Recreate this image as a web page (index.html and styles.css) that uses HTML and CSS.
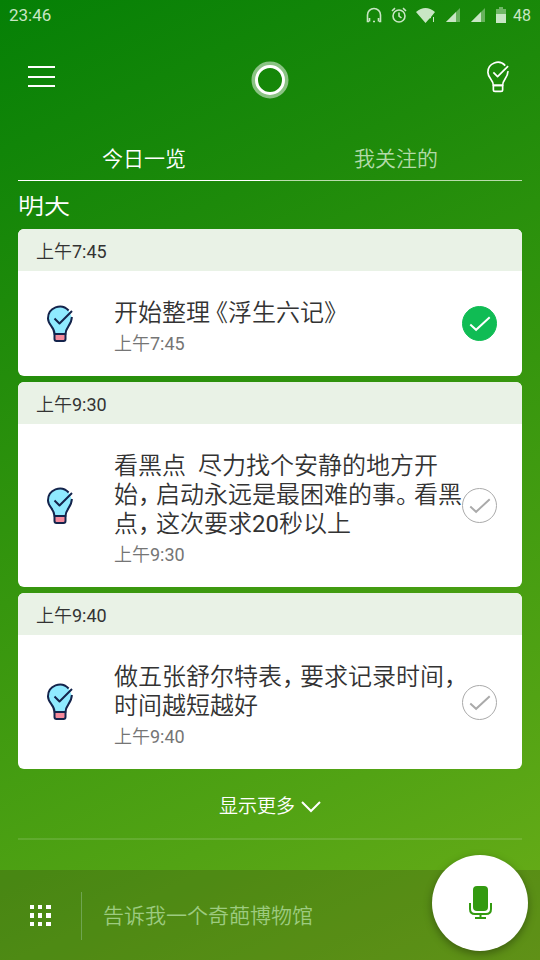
FILE: index.html
```
<!DOCTYPE html>
<html lang="zh-CN">
<head>
<meta charset="utf-8">
<meta name="viewport" content="width=device-width, initial-scale=1">
<title>今日一览</title>
<link rel="stylesheet" href="styles.css">
</head>
<body>
<svg class="defs" aria-hidden="true">
  <symbol id="bulb" viewBox="0 0 28 38">
    <path class="glass" d="M22.600 5.500A11.800 11.800 0 0 0 2 13.500C2 20 8.500 22 8.500 29h11c0-7 6.500-9 6.300-17"/>
    <path class="base" d="M8.500 29h11v5q0 2-2 2h-7q-2 0-2-2z"/>
    <path class="tick" d="M8.500 13.500l5 5L26 6"/>
  </symbol>
  <symbol id="check" viewBox="0 0 36 36">
    <path d="M8.500 19l6 5.500L28.500 11.500"/>
  </symbol>
  <symbol id="signal" viewBox="0 0 16 16">
    <path d="M1 15L15 1v14z" opacity=".45"/>
    <path d="M1 15L11 5v10z"/>
  </symbol>
</svg>

<div class="status">
  <span>23:46</span>
  <div class="status-icons">
    <svg width="16" height="16" viewBox="0 0 16 16"><path class="line" d="M3 14.500H1.500V8a6.500 6.500 0 0 1 13 0v6.500H13M3.500 11v3.500M12.500 11v3.500M7 14.500h2"/></svg>
    <svg width="16" height="16" viewBox="0 0 16 16"><circle class="line" cx="8" cy="9" r="6"/><path class="line" d="M8 5.500V9l2.500 2M1 4l3-2.800M15 4l-3-2.800"/></svg>
    <svg width="20" height="16" viewBox="0 0 20 16"><path d="M0 5Q9.500-3 19 5l-4 5v1l-1.500.5L9.500 16z"/><path d="M17 10h1v5h-1z"/></svg>
    <svg width="16" height="16"><use href="#signal"/></svg>
    <svg width="16" height="16"><use href="#signal"/></svg>
    <svg width="12" height="16" viewBox="0 0 12 16"><path d="M1 2h3V0h4v2h3v5H1z" opacity=".5"/><path d="M1 7h10v9H1z"/></svg>
    <span>48</span>
  </div>
</div>

<header class="header">
  <button class="icon-button" type="button" aria-label="菜单"><svg width="28" height="24" viewBox="0 0 28 24"><path class="bars" d="M0 2h27M0 12h27M0 21h27"/></svg></button>
  <svg class="ring" width="38" height="38" viewBox="0 0 38 38" aria-hidden="true"><circle class="ring-halo" cx="19" cy="19" r="16"/><circle class="ring-core" cx="19" cy="19" r="13.500"/></svg>
  <button class="icon-button" type="button" aria-label="提醒"><svg class="bulb-outline" width="24" height="32"><use href="#bulb"/></svg></button>
</header>

<nav class="tabs">
  <a class="tab active" href="#today" aria-current="page">今日一览</a>
  <a class="tab" href="#following">我关注的</a>
</nav>

<main class="feed" id="today">
  <div class="day"><h1>明天</h1></div>

  <article class="card">
    <div class="card-time">上午7:45</div>
    <div class="card-body">
      <svg class="bulb" width="28" height="38"><use href="#bulb"/></svg>
      <div class="card-text">
        <h2>开始整理<span class="mark open">《</span>浮生六记<span class="mark">》</span></h2>
        <p>上午7:45</p>
      </div>
      <label class="done"><input type="checkbox" checked aria-label="完成：开始整理《浮生六记》"><svg><use href="#check"/></svg></label>
    </div>
  </article>

  <article class="card">
    <div class="card-time">上午9:30</div>
    <div class="card-body">
      <svg class="bulb" width="28" height="38"><use href="#bulb"/></svg>
      <div class="card-text">
        <h2>看黑点  尽力找个安静的地方开始<span class="mark">，</span>启动永远是最困难的事<span class="mark">。</span>看黑点<span class="mark">，</span>这次要求20秒以上</h2>
        <p>上午9:30</p>
      </div>
      <label class="done"><input type="checkbox" aria-label="完成：看黑点"><svg><use href="#check"/></svg></label>
    </div>
  </article>

  <article class="card">
    <div class="card-time">上午9:40</div>
    <div class="card-body">
      <svg class="bulb" width="28" height="38"><use href="#bulb"/></svg>
      <div class="card-text">
        <h2>做五张舒尔特表<span class="mark">，</span>要求记录时间<span class="mark">，</span>时间越短越好</h2>
        <p>上午9:40</p>
      </div>
      <label class="done"><input type="checkbox" aria-label="完成：做五张舒尔特表"><svg><use href="#check"/></svg></label>
    </div>
  </article>

  <button class="more" type="button">显示更多<svg width="20" height="12" viewBox="0 0 20 12"><path d="M1 1l9 9 9-9"/></svg></button>
</main>

<footer class="ask">
  <button class="icon-button" type="button" aria-label="全部功能"><svg width="22" height="22" viewBox="0 0 22 22"><path class="dots" d="M0 0h4v4H0zM8 0h4v4H8zM16 0h5v4h-5zM0 8h4v5H0zM8 8h4v5H8zM16 8h5v5h-5zM0 17h4v4H0zM8 17h4v4H8zM16 17h5v4h-5z"/></svg></button>
  <input class="ask-input" type="text" placeholder="告诉我一个奇葩博物馆" aria-label="提问">
  <button class="mic" type="button" aria-label="语音输入"><svg width="24" height="34" viewBox="0 0 24 34"><rect x="5" y="0" width="15" height="25" rx="4"/><path d="M2 17v6q0 5 5 5h11q5 0 5-5v-6M12.500 28v4M7 32h11"/></svg></button>
</footer>
</body>
</html>
```
FILE: styles.css
```
* {
  box-sizing: border-box;
}

body {
  margin: 0;
  min-height: 100vh;
  display: flex;
  flex-direction: column;
  background: linear-gradient(155deg, #058006 0%, #1d8a0a 25%, #36960e 50%, #52a314 78%, #6cae18 100%);
  color: #fff;
  font-family: Roboto, "Noto Sans CJK SC DemiLight", "Noto Sans CJK SC", sans-serif;
  font-weight: 400;
}

button {
  border: 0;
  padding: 0;
  background: none;
  color: inherit;
  font: inherit;
}

svg {
  display: block;
  flex: none;
}

h1, h2, p {
  margin: 0;
  font-weight: inherit;
}

.defs {
  position: absolute;
  width: 0;
  height: 0;
}

.status {
  height: 30px;
  padding: 0 9px;
  display: flex;
  align-items: center;
  justify-content: space-between;
  color: #c8e6c4;
  font-size: 17px;
}

.status-icons {
  display: flex;
  align-items: center;
  gap: 9px;
  fill: currentColor;
}

.status-icons span {
  margin-left: -3px;
  font-size: 16px;
}

.line {
  fill: none;
  stroke: currentColor;
  stroke-width: 1.6;
}

.header {
  height: 106px;
  padding: 0 28px 6px;
  display: grid;
  grid-template-columns: 1fr auto 1fr;
  align-items: center;
}

.header .icon-button {
  padding: 0 2px 6px 0;
}

.header .icon-button:first-child {
  justify-self: start;
}

.header .icon-button:last-child {
  justify-self: end;
}

.icon-button {
  flex: none;
}

.bars {
  stroke: #fff;
  stroke-width: 2;
}

.ring {
  fill: none;
}

.ring-halo {
  stroke: rgba(255, 255, 255, .5);
  stroke-width: 5;
}

.ring-core {
  stroke: #fff;
  stroke-width: 3;
}

.glass {
  fill: var(--glass, none);
}

.base {
  fill: var(--base, none);
}

.tick {
  fill: none;
}

.bulb-outline,
.bulb {
  fill: none;
  stroke-width: 2;
  stroke-linejoin: round;
}

.bulb-outline {
  stroke: #fff;
}

.bulb {
  --glass: #8feaff;
  --base: #f58a9c;
  stroke: #14244c;
}

.tabs {
  margin: 0 18px;
  display: flex;
}

.tab {
  flex: 1;
  height: 45px;
  border-bottom: 1px solid #b9dcab;
  color: #b3dba9;
  font-size: 21px;
  line-height: 46px;
  text-align: center;
  text-decoration: none;
}

.tab.active {
  border-color: #fff;
  color: #fff;
}

.feed {
  flex: 1;
  margin: 15px 18px 30px;
  display: flex;
  flex-direction: column;
  gap: 6px;
  border-bottom: 2px solid rgba(255, 255, 255, .12);
}

.day {
  height: 27px;
  overflow: hidden;
}

.day h1 {
  margin-top: -7px;
  font-size: 26px;
  line-height: 32px;
}

.card {
  border-radius: 6px;
  background: #fff;
  overflow: hidden;
  color: #333;
}

.card-time {
  height: 42px;
  padding: 0 18px;
  background: #e9f2e6;
  font-size: 18px;
  line-height: 46px;
}

.card-body {
  padding: 0 25px 0 28px;
  display: flex;
  align-items: center;
}

.card-text {
  flex: 1;
  margin-left: 40px;
  padding: 28px 0 20px;
}

.card-text h2 {
  font-size: 24px;
  line-height: 29px;
  white-space: pre-wrap;
}

.card-text p {
  margin-top: 4px;
  color: #757575;
  font-size: 18px;
  line-height: 24px;
}

.mark {
  margin-right: 6px;
  font-feature-settings: "halt";
}

.mark.open {
  margin: 0 0 0 6px;
}

.done {
  flex: none;
  display: grid;
  color: #aaa;
}

.done input,
.done svg {
  grid-area: 1 / 1;
  width: 35px;
  height: 35px;
  margin: 0;
}

.done input {
  appearance: none;
  border: 1px solid #aaa;
  border-radius: 50%;
}

.done input:checked {
  border-color: #10bc54;
  background: #10bc54;
}

.done svg {
  fill: none;
  stroke: #aaa;
  stroke-width: 2;
  pointer-events: none;
}

.done input:checked + svg {
  stroke: #fff;
}

.more {
  padding: 18px 0 12px;
  display: flex;
  align-items: center;
  justify-content: center;
  gap: 6px;
  font-size: 19px;
  line-height: 28px;
}

.more svg {
  fill: none;
  stroke: #fff;
  stroke-width: 2;
}

.ask {
  position: relative;
  height: 90px;
  padding: 2px 18px 0 30px;
  display: flex;
  align-items: center;
  background: rgba(60, 60, 20, .25);
}

.dots {
  fill: #fff;
}

.ask-input {
  flex: 1;
  min-width: 0;
  height: 48px;
  margin: 0 100px 0 29px;
  padding: 0 21px;
  border: 0;
  border-left: 1px solid #6fa550;
  background: none;
  color: #fff;
  font: inherit;
  font-size: 21px;
}

.ask-input::placeholder {
  color: #9dcb80;
  opacity: 1;
}

.mic {
  position: absolute;
  right: 12px;
  bottom: 9px;
  width: 96px;
  height: 96px;
  display: grid;
  place-items: center;
  border-radius: 50%;
  background: #fff;
  box-shadow: 0 3px 8px rgba(0, 0, 0, .35);
}

.mic rect {
  fill: #339a10;
}

.mic path {
  fill: none;
  stroke: #339a10;
  stroke-width: 2;
}
```
